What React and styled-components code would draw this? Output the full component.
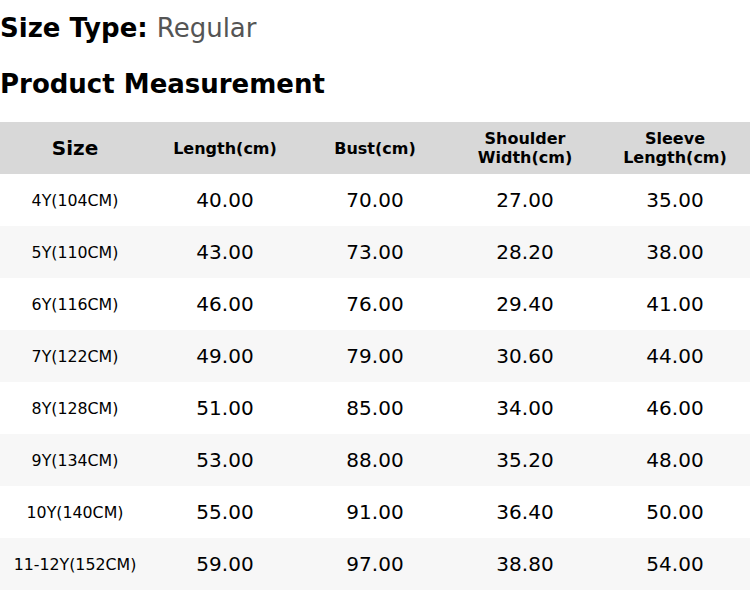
import React from 'react'
import styled, { createGlobalStyle } from 'styled-components'

const GlobalStyle = createGlobalStyle`
  body {
    margin: 0;
    background: #fff;
    font-family: "DejaVu Sans", sans-serif;
    color: #000;
  }
`;

const Page = styled.div`
  width: 750px;
  padding-top: 13px;
`;

const Heading = styled.h2`
  margin: 0;
  font-size: 26px;
  line-height: 30px;
  font-weight: bold;
  color: #000;
  margin-bottom: ${(p) => p.$gap || 0}px;
`;

const Light = styled.span`
  font-weight: normal;
  color: #555;
`;

const Table = styled.div`
  display: grid;
  grid-template-columns: repeat(5, 150px);
`;

const Row = styled.div`
  display: contents;
`;

const HeadCell = styled.div`
  height: 52px;
  background: #d8d8d8;
  display: flex;
  align-items: center;
  justify-content: center;
  text-align: center;
  font-weight: bold;
  font-size: ${(p) => (p.$big ? 20 : 16)}px;
  line-height: 19px;
`;

const Cell = styled.div`
  height: 52px;
  background: ${(p) => (p.$alt ? '#f7f7f7' : '#fff')};
  display: flex;
  align-items: center;
  justify-content: center;
  font-size: ${(p) => (p.$small ? 15.8 : 20)}px;
`;

const rows = [
  ['4Y(104CM)', '40.00', '70.00', '27.00', '35.00'],
  ['5Y(110CM)', '43.00', '73.00', '28.20', '38.00'],
  ['6Y(116CM)', '46.00', '76.00', '29.40', '41.00'],
  ['7Y(122CM)', '49.00', '79.00', '30.60', '44.00'],
  ['8Y(128CM)', '51.00', '85.00', '34.00', '46.00'],
  ['9Y(134CM)', '53.00', '88.00', '35.20', '48.00'],
  ['10Y(140CM)', '55.00', '91.00', '36.40', '50.00'],
  ['11-12Y(152CM)', '59.00', '97.00', '38.80', '54.00'],
];

export default function App() {
  return (
    <Page>
      <GlobalStyle />
      <Heading $gap={26}>
        Size Type: <Light>Regular</Light>
      </Heading>
      <Heading $gap={23}>Product Measurement</Heading>
      <Table>
        <Row>
          <HeadCell $big>Size</HeadCell>
          <HeadCell>Length(cm)</HeadCell>
          <HeadCell>Bust(cm)</HeadCell>
          <HeadCell>Shoulder<br />Width(cm)</HeadCell>
          <HeadCell>Sleeve<br />Length(cm)</HeadCell>
        </Row>
        {rows.map((r, i) => (
          <Row key={r[0]}>
            {r.map((v, j) => (
              <Cell key={j} $alt={i % 2 === 1} $small={j === 0}>
                {v}
              </Cell>
            ))}
          </Row>
        ))}
      </Table>
    </Page>
  )
}
